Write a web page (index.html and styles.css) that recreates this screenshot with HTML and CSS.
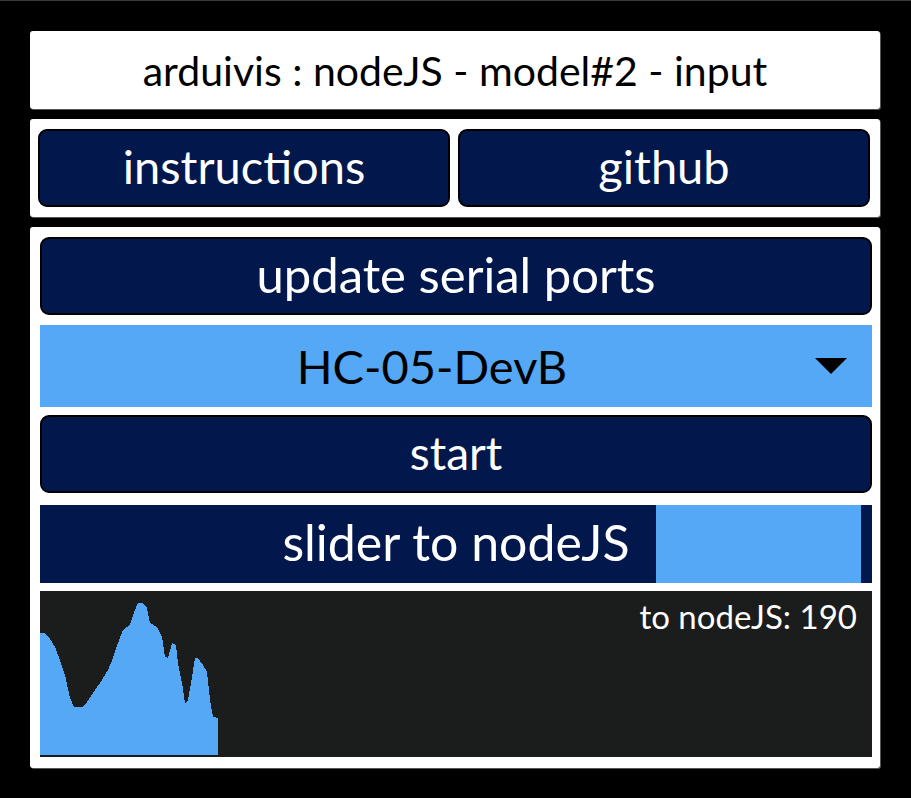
FILE: index.html
```html
<!DOCTYPE html>
<html>
<head>
<meta charset="utf-8">
<link rel="stylesheet" href="styles.css">
</head>
<body>
<div class="app">
  <div class="panel header">arduivis : nodeJS - model#2 - input</div>
  <div class="panel links">
    <div class="btn link">instructions</div>
    <div class="btn link">github</div>
  </div>
  <div class="panel controls">
    <div class="btn update">update serial ports</div>
    <div class="select">
      <span class="select-label">HC-05-DevB</span>
      <span class="arrow"></span>
    </div>
    <div class="btn start">start</div>
    <div class="slider">slider to nodeJS</div>
    <div class="graph">
      <svg class="plot" viewBox="0 0 832 166" preserveAspectRatio="none">
        <polygon fill="#55a8f5" points="0,42 5,42 10,48 15,56 20,69 25,84 30,107 34,116 42,116 47,111 55,99 62,89 68,79 73,67 78,52 83,39 90,34 95,19 98,12 102,12 107,17 110,32 117,36 122,46 125,66 128,67 132,52 136,54 138,72 142,92 145,112 148,109 152,86 155,67 158,67 163,74 167,81 170,109 173,126 178,127 178,164 0,164"/>
      </svg>
      <span class="readout">to nodeJS: 190</span>
    </div>
  </div>
</div>
</body>
</html>
```

FILE: styles.css
```css
html, body {
  margin: 0;
  padding: 0;
  background: #000;
}
body {
  font-family: "Lato", "Noto Sans", sans-serif;
  border-top: 1px solid #3a3a3a;
  height: 797px;
  box-sizing: border-box;
}
.app {
  width: 850px;
  margin-left: 30px;
  padding-top: 30px;
  display: flex;
  flex-direction: column;
  gap: 10px;
}
.panel {
  background: #fff;
  border-radius: 3px;
  box-shadow: 1px 1px 0 #555;
}
.header {
  height: 78px;
  display: flex;
  align-items: center;
  justify-content: center;
  font-size: 41px;
  color: #000;
}
.links {
  display: grid;
  grid-template-columns: 1fr 1fr;
  gap: 8px;
  padding: 10px 10px 10px 8px;
}
.btn {
  height: 78px;
  box-sizing: border-box;
  background: #02184d;
  border: 2px solid #000;
  border-radius: 9px;
  color: #fff;
  font-size: 47px;
  display: flex;
  align-items: center;
  justify-content: center;
  padding-bottom: 4px;
}
.update {
  font-size: 49px;
}
.controls {
  display: flex;
  flex-direction: column;
  padding: 10px 8px 11px 10px;
}
.select {
  margin-top: 10px;
  height: 82px;
  background: #55a8f5;
  display: flex;
  align-items: center;
  padding-right: 48px;
  position: relative;
  font-size: 47px;
  color: #000;
}
.select-label {
  flex: 1;
  text-align: center;
}
.arrow {
  position: absolute;
  right: 25px;
  top: 33px;
  width: 0;
  height: 0;
  border-left: 16px solid transparent;
  border-right: 16px solid transparent;
  border-top: 16px solid #000;
}
.start {
  margin-top: 8px;
  font-size: 46px;
}
.slider {
  margin-top: 12px;
  height: 78px;
  background: linear-gradient(to right, #02184d 0, #02184d 616px, #55a8f5 616px, #55a8f5 821px, #02184d 821px);
  color: #fff;
  font-size: 50px;
  display: flex;
  align-items: center;
  justify-content: center;
  padding-bottom: 4px;
  box-sizing: border-box;
}
.graph {
  margin-top: 8px;
  height: 166px;
  background: #1b1c1c;
  position: relative;
}
.plot {
  display: block;
  width: 832px;
  height: 166px;
  shape-rendering: crispEdges;
}
.readout {
  position: absolute;
  right: 15px;
  top: 5px;
  color: #fff;
  font-size: 33px;
}
```
